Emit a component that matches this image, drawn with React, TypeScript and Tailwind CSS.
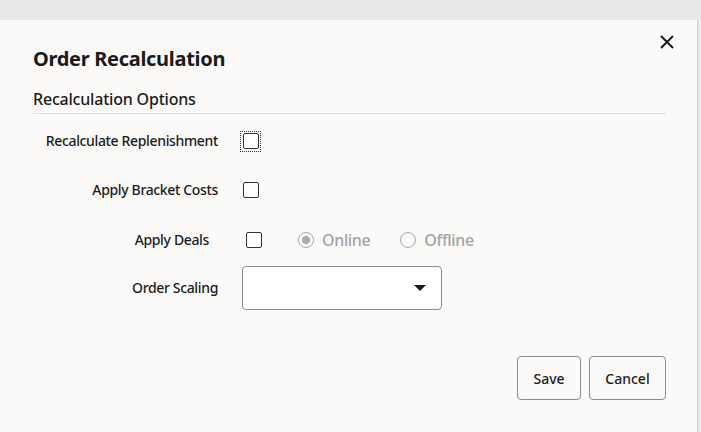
import { useState } from "react";

const FONT = "font-['Noto_Sans',_'Liberation_Sans',_sans-serif]";

function Box({ focused }: { focused?: boolean }) {
  return (
    <span
      className={`flex h-[17px] w-[17px] items-center justify-center ${
        focused ? "outline-1 outline-dotted outline-[#333] outline-offset-[1px]" : ""
      }`}
    >
      <span className="block h-[16px] w-[16px] rounded-[2px] border-[1.5px] border-[#333] bg-white" />
    </span>
  );
}

function Radio({ checked, label }: { checked?: boolean; label: string }) {
  return (
    <span className="flex items-center gap-[8px] text-[16px] text-[#a3a3a3]">
      <span className="flex h-[16px] w-[16px] items-center justify-center rounded-full border border-[#aaa]">
        {checked && <span className="block h-[8px] w-[8px] rounded-full bg-[#aaa]" />}
      </span>
      {label}
    </span>
  );
}

export default function App() {
  const [scaling] = useState("");

  return (
    <div className={`h-[432px] w-[701px] overflow-hidden bg-[#e9e9e8] ${FONT}`}>
      <div className="mt-[20px] h-[412px] w-[698px] border-r border-[#cfcfcf] bg-[#fbfaf9] pl-[33px] pr-[31px] text-[#1a1a1a]">
        <div className="flex justify-end pt-[14px]">
          <svg width="16" height="16" viewBox="0 0 16 16" className="mr-[-9px]">
            <path d="M2 2 L14 14 M14 2 L2 14" stroke="#1a1a1a" strokeWidth="2" />
          </svg>
        </div>
        <h1 className="mt-[-5px] text-[20px] font-bold leading-[28px] tracking-[-0.3px]">Order Recalculation</h1>
        <h2 className="mt-[15px] text-[16px] font-medium leading-[22px] tracking-[-0.2px]">Recalculation Options</h2>
        <div className="mt-[3px] border-b border-[#dcdcdc]" />

        <div className="mt-[10px] grid grid-cols-[185px_1fr] items-center gap-x-[24px] text-[14px] font-medium tracking-[-0.35px]">
          <span className="h-[34px] text-right leading-[34px]">Recalculate Replenishment</span>
          <Box focused />

          <span className="mt-[15px] h-[34px] text-right leading-[34px]">Apply Bracket Costs</span>
          <span className="mt-[15px]"><Box /></span>

          <span className="mt-[16px] h-[34px] pr-[9px] text-right leading-[34px]">Apply Deals</span>
          <span className="mt-[16px] flex items-center gap-[36px] pl-[3px]">
            <Box />
            <span className="flex items-center gap-[30px]">
              <Radio checked label="Online" />
              <Radio label="Offline" />
            </span>
          </span>

          <span className="mt-[9px] h-[44px] text-right leading-[44px]">Order Scaling</span>
          <div className="mt-[9px] flex h-[44px] w-[200px] items-center justify-between rounded-[4px] border border-[#8c8c8c] bg-white pl-3 pr-[15px]">
            <span>{scaling}</span>
            <svg width="12" height="6" viewBox="0 0 12 6">
              <path d="M0 0 L12 0 L6 6 Z" fill="#1a1a1a" />
            </svg>
          </div>
        </div>

        <div className="mt-[46px] flex justify-end gap-[8px] text-[14px] font-medium">
          <button className="h-[44px] w-[64px] rounded-[4px] border border-[#8c8c8c] bg-[#fbfaf9]">Save</button>
          <button className="h-[44px] w-[77px] rounded-[4px] border border-[#8c8c8c] bg-[#fbfaf9]">Cancel</button>
        </div>
      </div>
    </div>
  );
}
